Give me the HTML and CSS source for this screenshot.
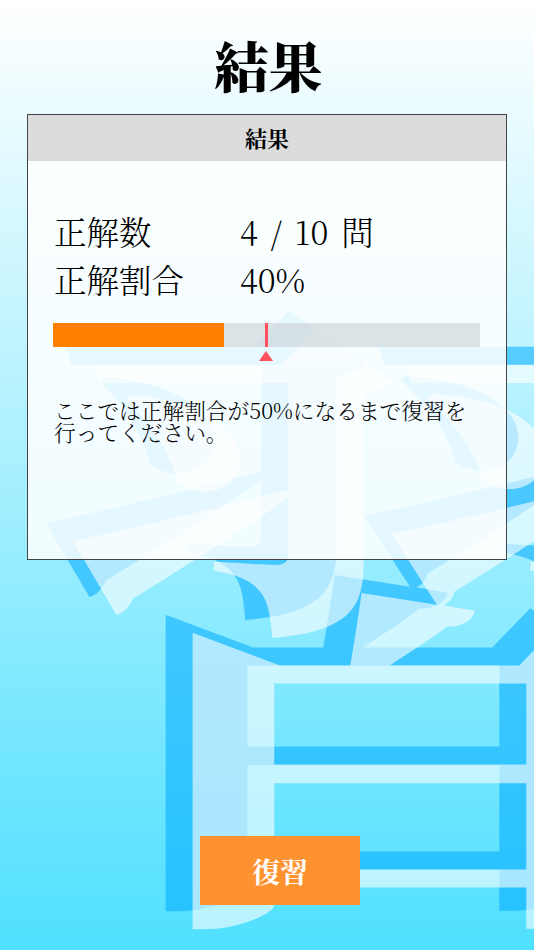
FILE: index.html
```html
<!DOCTYPE html>
<html lang="ja">
<head>
<meta charset="utf-8">
<title>結果</title>
<link rel="stylesheet" href="styles.css">
</head>
<body>
<div class="screen">
  <div class="bg-glyph" aria-hidden="true">習</div>
  <h1 class="title">結果</h1>
  <section class="card">
    <h2 class="card-head">結果</h2>
    <div class="card-body">
      <dl class="stats">
        <dt>正解数</dt><dd class="count">4 / 10 問</dd>
        <dt>正解割合</dt><dd>40%</dd>
      </dl>
      <div class="meter">
        <div class="meter-track"><div class="meter-fill" style="width:40%"></div></div>
        <div class="meter-mark"></div>
        <div class="meter-arrow"></div>
      </div>
      <p class="note">ここでは正解割合が50%になるまで復習を行ってください。</p>
    </div>
  </section>
  <button class="review">復習</button>
</div>
</body>
</html>
```
FILE: styles.css
```css
* { box-sizing: border-box; margin: 0; padding: 0; }
html, body { width: 534px; height: 950px; overflow: hidden; }
body { font-family: "Noto Serif CJK JP", "Liberation Serif", serif; color: #000; }
.screen {
  position: relative; width: 534px; height: 950px; overflow: hidden;
  background: linear-gradient(180deg, #ffffff 0%, #4fe0ff 100%);
  display: flex; flex-direction: column; align-items: flex-start;
}
.bg-glyph {
  position: absolute; left: 58px; top: 264px;
  font-size: 652px; line-height: 1; font-weight: 700;
  color: rgba(255,255,255,.6);
  transform: scaleX(1.08);
  transform-origin: 131px 0;
  text-shadow: -25px -18px 0 rgba(0,170,255,.55);
}
.title {
  position: relative; width: 100%; height: 114px; padding: 31px 0 0 3px;
  font-size: 54px; line-height: 68px; font-weight: 900; text-align: center;
}
.card {
  position: relative; margin-left: 27px; width: 480px; height: 446px;
  border: 1px solid #444; background: rgba(255,255,255,.86);
}
.card-head {
  height: 46px; background: #dcdcdc;
  font-size: 22px; line-height: 46px; font-weight: 700; text-align: center;
}
.card-body { padding: 46px 26px 0 25px; }
.stats { display: grid; grid-template-columns: 186px 1fr; grid-auto-rows: 48px; font-size: 32.5px; line-height: 48px; font-weight: 300; margin-left: 1px; }
.count { word-spacing: 3.5px; letter-spacing: .5px; }
.meter { position: relative; margin-top: 20px; height: 38px; }
.meter-track { height: 24px; background: rgba(200,208,212,.6); }
.meter-fill { height: 100%; background: #ff8000; }
.meter-mark { position: absolute; left: 212px; top: 0; width: 3px; height: 24px; background: #ff5060; }
.meter-arrow { position: absolute; left: 206px; top: 28px; width: 0; height: 0; border-left: 7.5px solid transparent; border-right: 7.5px solid transparent; border-bottom: 10px solid #ff5060; }
.note { margin-top: 38px; font-size: 21.7px; line-height: 22px; font-weight: 300; padding-left: 1px; width: 420px; }
.review {
  position: relative; margin: 276px 0 0 200px; width: 160px; height: 69px;
  border: none; background: #ff9230; color: #fff;
  font-family: inherit; font-size: 28px; font-weight: 700;
}
```
